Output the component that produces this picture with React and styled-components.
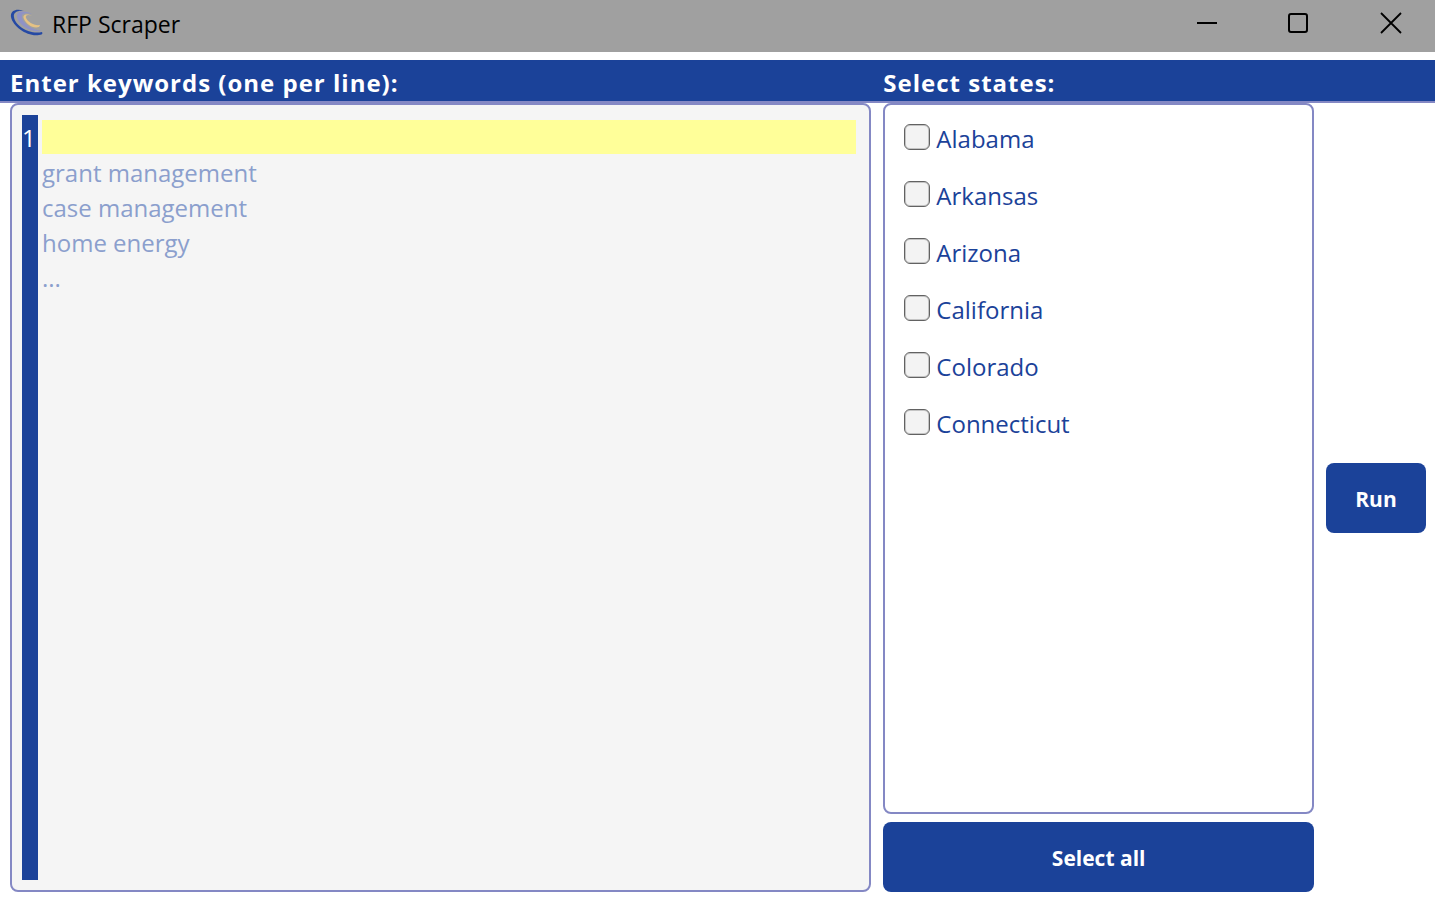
import React, { useState } from "react";
import styled, { createGlobalStyle } from "styled-components";

const blue = "#1b4299";
const lilac = "#8488c4";
const columns = "minmax(0, 2fr) minmax(0, 1fr) 100px";

const GlobalStyle = createGlobalStyle`
  *, *::before, *::after { box-sizing: border-box; }
  body {
    margin: 0;
    background: #fff;
    color: ${blue};
    font-family: "Open Sans", "Noto Sans", sans-serif;
    font-size: 24px;
  }
  button, textarea { font: inherit; }
`;

const Window = styled.div`
  display: flex;
  flex-direction: column;
  min-height: 100vh;
`;

const TitleBar = styled.header`
  display: flex;
  align-items: center;
  height: 52px;
  padding: 0 0 6px 10px;
  background: #a0a0a0;
  color: #000;
`;

const Title = styled.h1`
  flex: 1;
  margin: 2px 0 0 8px;
  font-size: 23px;
  line-height: 32px;
  font-weight: 400;
`;

const WindowButton = styled.button`
  display: flex;
  align-items: center;
  justify-content: center;
  width: 92px;
  height: 46px;
  padding: 0 0 0 4px;
  border: 0;
  background: none;
  color: #000;
`;

const LabelBar = styled.div`
  display: grid;
  grid-template-columns: ${columns};
  column-gap: 12px;
  margin-top: 8px;
  padding: 6px 9px 1px 10px;
  border-bottom: 2px solid ${lilac};
  background: ${blue};
`;

const BarLabel = styled.label`
  color: #fff;
  font-size: 24px;
  line-height: 34px;
  font-weight: 700;
  letter-spacing: 1px;
  white-space: nowrap;
`;

const Content = styled.main`
  display: grid;
  flex: 1;
  grid-template-columns: ${columns};
  column-gap: 12px;
  padding: 0 9px 6px 10px;
`;

const Editor = styled.section`
  display: flex;
  gap: 4px;
  padding: 10px;
  border: 2px solid ${lilac};
  border-radius: 8px;
  background: #f5f5f5;
`;

const Gutter = styled.div`
  width: 16px;
  padding-top: 5px;
  background: ${blue};
  color: #fff;
  line-height: 35px;
`;

const Keywords = styled.textarea`
  flex: 1;
  min-width: 0;
  margin: 5px 3px 0 0;
  padding: 0;
  border: 0;
  outline: 0;
  resize: none;
  background: linear-gradient(#ffff99, #ffff99) 0 0 / 100% 34px no-repeat;
  color: ${blue};
  line-height: 35px;

  &::placeholder {
    color: #8b9fcd;
    opacity: 1;
  }
`;

const StateColumn = styled.section`
  display: flex;
  flex-direction: column;
  gap: 8px;
`;

const StateList = styled.ul`
  display: flex;
  flex: 1;
  flex-direction: column;
  gap: 22px;
  margin: 0;
  padding: 16px 19px;
  border: 2px solid ${lilac};
  border-radius: 8px;
  list-style: none;
`;

const StateLabel = styled.label`
  display: flex;
  gap: 6px;
  line-height: 35px;
`;

const Tick = styled.input`
  appearance: none;
  width: 26px;
  height: 26px;
  margin: 3px 0 0;
  border: 1px solid #626262;
  border-radius: 6px;
  background: #f3f3f3;
  box-shadow: inset 0 0 0 1px #c4c4c4;

  &:checked {
    background: ${blue};
    box-shadow: inset 0 0 0 4px #f3f3f3;
  }
`;

const ActionButton = styled.button`
  width: 100%;
  height: 70px;
  padding: 2px 0 0;
  border: 0;
  border-radius: 8px;
  background: ${blue};
  color: #fff;
  font-size: 21px;
  font-weight: 700;
`;

const RunColumn = styled.div`
  display: flex;
  align-items: center;
`;

const states = ["Alabama", "Arkansas", "Arizona", "California", "Colorado", "Connecticut"];
const hint = "\ngrant management\ncase management\nhome energy\n...";

function Logo() {
  return (
    <svg width="34" height="28" viewBox="0 0 34 28" fill="none" aria-hidden="true">
      <path d="M14 2C6 -1 0 2 1 8C3 18 18 28 29 26C32 26 33 25 32 23C20 26 5 17 4 8C3 4 7 1 14 2Z" fill="#2549a4" />
      <path d="M22 5C13 1 6 2 7 8C8 15 20 24 32 22C22 21 12 14 12 8C11 5 15 3 22 5Z" fill="#8f92c6" />
      <path d="M22 7C16 4 12 6 14 10C16 15 23 20 29 18L30 16C24 17 18 13 16 9C15 6 18 5 22 7Z" fill="#e6c283" />
    </svg>
  );
}

export default function App() {
  const [text, setText] = useState("");
  const [chosen, setChosen] = useState([]);
  const toggle = (name) =>
    setChosen((list) => (list.includes(name) ? list.filter((s) => s !== name) : [...list, name]));

  return (
    <Window>
      <GlobalStyle />
      <TitleBar>
        <Logo />
        <Title>RFP Scraper</Title>
        <WindowButton aria-label="Minimize">
          <svg width="22" height="22" stroke="currentColor" strokeWidth="2"><path d="M1 11H21" /></svg>
        </WindowButton>
        <WindowButton aria-label="Maximize">
          <svg width="22" height="22" stroke="currentColor" strokeWidth="2" fill="none"><rect x="1" y="2" width="18" height="18" rx="2" /></svg>
        </WindowButton>
        <WindowButton aria-label="Close">
          <svg width="22" height="22" stroke="currentColor" strokeWidth="1.8"><path d="M1 1L21 21M21 1L1 21" /></svg>
        </WindowButton>
      </TitleBar>
      <LabelBar>
        <BarLabel htmlFor="keywords">Enter keywords (one per line):</BarLabel>
        <BarLabel as="span" id="states-label">Select states:</BarLabel>
      </LabelBar>
      <Content>
        <Editor>
          <Gutter>
            {text.split("\n").map((_, i) => <div key={i}>{i + 1}</div>)}
          </Gutter>
          <Keywords id="keywords" placeholder={hint} value={text} onChange={(e) => setText(e.target.value)} />
        </Editor>
        <StateColumn>
          <StateList aria-labelledby="states-label">
            {states.map((name) => (
              <li key={name}>
                <StateLabel>
                  <Tick type="checkbox" checked={chosen.includes(name)} onChange={() => toggle(name)} />
                  {name}
                </StateLabel>
              </li>
            ))}
          </StateList>
          <ActionButton onClick={() => setChosen(states)}>Select all</ActionButton>
        </StateColumn>
        <RunColumn>
          <ActionButton>Run</ActionButton>
        </RunColumn>
      </Content>
    </Window>
  );
}
